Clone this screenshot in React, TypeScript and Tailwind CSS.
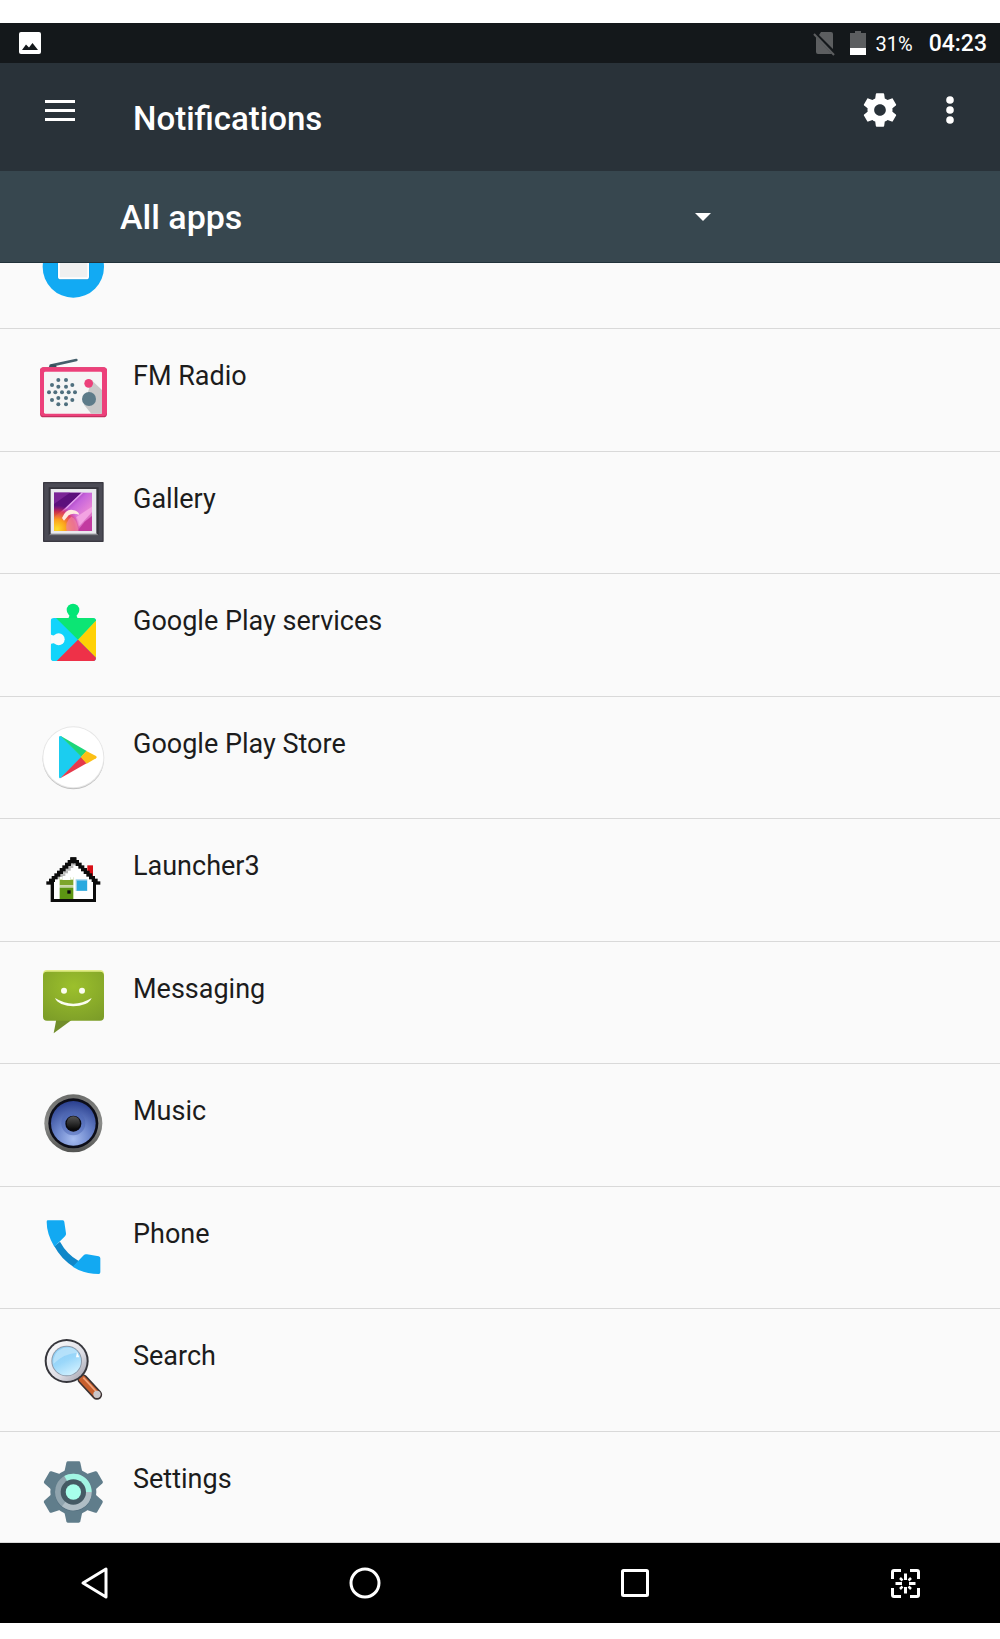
import React from "react";

function FolderIcon() {
  return (
    <svg viewBox="111 789 216 108" className="h-9 w-18 shrink-0" aria-hidden="true">
      <circle cx="220" cy="801" r="92" fill="#12aaf3" />
      <rect x="173" y="760" width="95" height="80" rx="9" fill="#0d97dc" />
      <rect x="174" y="760" width="93" height="78" rx="8" fill="#fff" />
      <rect x="180" y="760" width="82" height="72" fill="#f0f0f0" />
    </svg>
  );
}

const speakerDots = [
  [115, 120], [138, 120], [96, 135], [157, 135], [115, 140], [138, 140],
  [87, 157], [106, 157], [126, 157], [146, 157], [165, 157],
  [115, 174], [138, 174], [96, 180], [157, 180], [115, 193], [138, 193],
];

function RadioIcon() {
  return (
    <svg viewBox="51 42 216 216" className="size-18 shrink-0" aria-hidden="true">
      <path d="M92 77 L169 60" stroke="#455f6b" strokeWidth="8" strokeLinecap="round" />
      <path d="M86 82 Q92 68 108 75 L110 82 Z" fill="#37505c" />
      <rect x="60" y="82" width="201" height="150" rx="11" fill="#c2305f" />
      <rect x="60" y="82" width="201" height="146" rx="11" fill="#ec407a" />
      <rect x="72" y="95" width="174" height="126" rx="4" fill="#f5f5f5" />
      <path d="M215 121 L246 150 V221 H214 L192 194 Z" fill="#c8c8c8" />
      {speakerDots.map(([x, y]) => (
        <circle key={`${x}-${y}`} cx={x} cy={y} r="6" fill="#4f6f7e" />
      ))}
      <circle cx="206" cy="130" r="13" fill="#ec407a" />
      <circle cx="207" cy="177" r="21" fill="#5d7b89" />
    </svg>
  );
}

function GalleryIcon() {
  return (
    <svg viewBox="51 411 216 216" className="size-18 shrink-0" aria-hidden="true">
      <defs>
        <linearGradient id="photo" x1="0" y1="0" x2="1" y2="1">
          <stop offset="0.2" stopColor="#8d1fa8" />
          <stop offset="0.45" stopColor="#c766dc" />
          <stop offset="0.7" stopColor="#ea86d6" />
          <stop offset="1" stopColor="#b8399c" />
        </linearGradient>
        <radialGradient id="glow" cx="0.08" cy="0.95" r="0.62">
          <stop offset="0" stopColor="#ffe02a" />
          <stop offset="0.4" stopColor="#fba01c" />
          <stop offset="0.75" stopColor="#e8323c" stopOpacity="0.75" />
          <stop offset="1" stopColor="#c0208a" stopOpacity="0" />
        </radialGradient>
      </defs>
      <rect x="69" y="426" width="182" height="180" rx="2" fill="#3a3942" />
      <rect x="73" y="430" width="174" height="172" fill="#4b4b55" />
      <path d="M86 442 H236 V586 H86 Z" fill="#34333b" />
      <path d="M86 586 L96 578 H228 L236 586 Z" fill="#85858c" />
      <rect x="92" y="447" width="137" height="134" fill="#e9e9ee" />
      <rect x="102" y="458" width="114" height="115" fill="url(#photo)" />
      <path d="M102 458 H184 L136 503 L102 532 Z" fill="#5c0f7c" />
      <path d="M102 458 H150 L102 492 Z" fill="#7a2496" />
      <path d="M184 458 H190 L140 506 L120 520 Z" fill="#e3a4ee" />
      <path d="M168 532 L216 500 V516 L176 560 Z" fill="#f3a3e2" />
      <path d="M172 573 L194 545 L216 528 V573 Z" fill="#c23aa0" />
      <rect x="102" y="458" width="114" height="115" fill="url(#glow)" />
      <path d="M126 534 Q138 506 158 510 Q174 512 178 524 Q156 518 146 526 L132 542 Z" fill="#ffeadf" />
      <path d="M140 573 Q134 544 154 530 Q170 534 176 573 Z" fill="#ee86a4" opacity="0.7" />
    </svg>
  );
}

function PlayServicesIcon() {
  return (
    <svg viewBox="51 57 216 216" className="size-18 shrink-0" aria-hidden="true">
      <defs>
        <clipPath id="puzzle">
          <rect x="92" y="114" width="136" height="129" rx="10" />
        </clipPath>
      </defs>
      <circle cx="159" cy="90" r="19" fill="#02e676" />
      <path d="M148 100 H170 V108 Q170 115 178 116 H140 Q148 115 148 108 Z" fill="#02e676" />
      <g clipPath="url(#puzzle)">
        <rect x="92" y="114" width="136" height="129" fill="#12d4fb" />
        <path d="M108 114 H235 L174 179 Z" fill="#0ce574" />
        <path d="M235 114 V240 L174 179 Z" fill="#ffd105" />
        <path d="M108 245 H240 L174 179 Z" fill="#ee3148" />
      </g>
      <circle cx="116" cy="178" r="18" fill="#fafafa" />
      <path d="M91 160 Q92 168 104 166 V190 Q92 188 91 197 Z" fill="#fafafa" />
    </svg>
  );
}

function PlayStoreIcon() {
  return (
    <svg viewBox="51 426 216 216" className="size-18 shrink-0" aria-hidden="true">
      <circle cx="160" cy="536" r="92" fill="#c0c0c0" />
      <circle cx="160" cy="532" r="93" fill="#e6e6e6" />
      <circle cx="160" cy="532" r="90" fill="#fff" />
      <path d="M117 471 Q118 466 124 469 L186 530 L122 594 Q117 596 117 590 Z" fill="#1bcdf0" />
      <path d="M121 467 L200 513 L184 530 Z" fill="#1cd67a" />
      <path d="M184 530 L200 550 L121 595 Z" fill="#e5394b" />
      <path d="M199 513 L228 528 Q233 532 228 535 L200 551 L182 531 Z" fill="#fbbf16" />
    </svg>
  );
}

const roofSteps = [0, 1, 2, 3, 4, 5, 6, 7, 8, 9];

function LauncherIcon() {
  return (
    <svg viewBox="51 12 216 216" className="size-18 shrink-0" aria-hidden="true">
      <rect x="202" y="76" width="17" height="34" fill="#d80f16" />
      <path d="M160 60 L226 126 V184 H94 V126 Z" fill="#fff" />
      {roofSteps.slice(1, 7).map((i) => (
        <rect key={i} x={160 - 8 * i} y={60 + 8 * i} width="16" height="8" fill="#b9b9b9" />
      ))}
      {roofSteps.map((i) => (
        <g key={i} fill="#0c0c0c">
          <rect x={151 - 8 * i} y={52 + 8 * i} width="18" height="10" />
          <rect x={151 + 8 * i} y={52 + 8 * i} width="18" height="10" />
        </g>
      ))}
      <path d="M92 124 H102 V177 H219 V124 H228 V186 H92 Z" fill="#0c0c0c" />
      <path d="M119 112 H127 V120 H152 V112 H160 V136 H119 Z" fill="#7da52b" />
      <rect x="119" y="111" width="9" height="8" fill="#fff" />
      <rect x="152" y="111" width="8" height="8" fill="#fff" />
      <rect x="119" y="136" width="41" height="7" fill="#c5d3a4" />
      <rect x="119" y="143" width="41" height="34" fill="#5c9513" />
      <rect x="142" y="151" width="10" height="10" fill="#0c0c0c" />
      <rect x="167" y="118" width="35" height="35" fill="#93cdea" />
      <rect x="171" y="122" width="30" height="30" fill="#2aa9df" />
    </svg>
  );
}

function MessagingIcon() {
  return (
    <svg viewBox="51 381 216 216" className="size-18 shrink-0" aria-hidden="true">
      <defs>
        <radialGradient id="bubble" cx="0.5" cy="0.3" r="0.8">
          <stop offset="0" stopColor="#9cc02c" />
          <stop offset="1" stopColor="#7c9d28" />
        </radialGradient>
      </defs>
      <path d="M109 538 L101 580 L158 538 Z" fill="#718d2b" />
      <rect x="69" y="390" width="183" height="60" rx="12" fill="#e2ed86" />
      <rect x="69" y="395" width="183" height="147" rx="12" fill="url(#bubble)" />
      <circle cx="132" cy="452" r="9" fill="#fbfdf0" />
      <circle cx="186" cy="452" r="9" fill="#fbfdf0" />
      <path d="M105 474 Q160 508 215 474 Q210 486 196 492 Q160 506 124 492 Q108 484 105 474 Z" fill="#fbfdf0" />
    </svg>
  );
}

function MusicIcon() {
  return (
    <svg viewBox="51 27 216 216" className="size-18 shrink-0" aria-hidden="true">
      <defs>
        <linearGradient id="rim" x1="0" y1="0" x2="0" y2="1">
          <stop offset="0" stopColor="#6c6d6b" />
          <stop offset="0.5" stopColor="#8b8c8a" />
          <stop offset="1" stopColor="#525351" />
        </linearGradient>
        <radialGradient id="cone" cx="0.5" cy="0.85" r="0.85">
          <stop offset="0" stopColor="#a7bdf0" />
          <stop offset="0.45" stopColor="#6c86cc" />
          <stop offset="1" stopColor="#2a3f8e" />
        </radialGradient>
        <linearGradient id="cap" x1="0" y1="0" x2="0" y2="1">
          <stop offset="0" stopColor="#555" />
          <stop offset="1" stopColor="#080808" />
        </linearGradient>
      </defs>
      <circle cx="160" cy="130" r="87" fill="url(#rim)" />
      <circle cx="160" cy="130" r="75" fill="#0c0d18" />
      <circle cx="160" cy="130" r="67" fill="url(#cone)" />
      <circle cx="160" cy="130" r="36" fill="#4964b1" opacity="0.5" />
      <circle cx="160" cy="131" r="24" fill="#0a0a0f" />
      <circle cx="160" cy="129" r="20" fill="url(#cap)" />
    </svg>
  );
}

function PhoneIcon() {
  return (
    <svg viewBox="51 396 216 216" className="size-18 shrink-0" aria-hidden="true">
      <path d="M103 499 L120 485 Q140 522 176 543 L160 560 Q124 538 103 499 Z" fill="#0f87c9" />
      <path d="M84 421 H128 Q133 421 133 426 L138 460 Q139 465 135 469 L103 500 Q80 462 80 425 Q80 421 84 421 Z" fill="#12a9f2" />
      <path d="M158 560 L191 526 Q195 521 201 523 L236 529 Q241 530 241 535 V577 Q241 582 236 582 Q192 582 158 560 Z" fill="#12a9f2" />
    </svg>
  );
}

function SearchIcon() {
  return (
    <svg viewBox="51 42 216 216" className="size-18 shrink-0" aria-hidden="true">
      <defs>
        <linearGradient id="ring" x1="0" y1="0" x2="1" y2="1">
          <stop offset="0" stopColor="#fff" />
          <stop offset="0.6" stopColor="#dcdce4" />
          <stop offset="1" stopColor="#9a9aa6" />
        </linearGradient>
        <linearGradient id="glass" x1="0.2" y1="0" x2="0.7" y2="1">
          <stop offset="0" stopColor="#8ccdf5" />
          <stop offset="0.5" stopColor="#9ad7fa" />
          <stop offset="1" stopColor="#d2f1ff" />
        </linearGradient>
      </defs>
      <path d="M176 160 L232 224" stroke="#2b2b2f" strokeWidth="13" strokeLinecap="round" />
      <path d="M188 178 L231 224" stroke="#3a3233" strokeWidth="31" strokeLinecap="round" />
      <path d="M187 177 L230 223" stroke="#c75f2e" strokeWidth="21" strokeLinecap="round" />
      <path d="M190 173 L230 216" stroke="#f0a47c" strokeWidth="5" />
      <circle cx="231" cy="223" r="11" fill="#c9c6ca" />
      <circle cx="140" cy="123" r="66" fill="#36363c" />
      <circle cx="140" cy="123" r="60" fill="url(#ring)" />
      <circle cx="140" cy="123" r="46" fill="#8b98a8" />
      <circle cx="140" cy="123" r="43" fill="url(#glass)" />
      <path d="M100 132 Q98 96 130 84 Q162 78 174 98 Q130 100 100 132 Z" fill="#c3e7fb" opacity="0.7" />
      <path d="M171 96 L178 112 L168 112 Z" fill="#fff" />
    </svg>
  );
}

function SettingsIcon() {
  return (
    <svg viewBox="51 411 216 216" className="size-18 shrink-0" aria-hidden="true">
      <g fill="#607d8b">
        <circle cx="160" cy="516" r="69" />
        {[0, 60, 120, 180, 240, 300].map((angle) => (
          <path
            key={angle}
            d="M144 424 H177 Q180 424 181 428 L187 456 L160 516 L133 456 L139 428 Q140 424 144 424 Z"
            transform={`rotate(${angle} 160 516)`}
          />
        ))}
      </g>
      <circle cx="160" cy="519" r="55" fill="#50697a" opacity="0.6" />
      <circle cx="160" cy="516" r="55" fill="#90a4ae" />
      <path d="M160 516 L126 559 A55 55 0 0 0 215 516 Z" fill="#b0bec5" />
      <path d="M160 516 L133 468 A55 55 0 0 1 215 516 Z" fill="#a2f5e3" />
      <circle cx="160" cy="516" r="38" fill="#455a64" />
      <circle cx="160" cy="516" r="23" fill="#a7ffeb" />
    </svg>
  );
}

const apps = [
  { name: "FM Radio", icon: RadioIcon },
  { name: "Gallery", icon: GalleryIcon },
  { name: "Google Play services", icon: PlayServicesIcon },
  { name: "Google Play Store", icon: PlayStoreIcon },
  { name: "Launcher3", icon: LauncherIcon },
  { name: "Messaging", icon: MessagingIcon },
  { name: "Music", icon: MusicIcon },
  { name: "Phone", icon: PhoneIcon },
  { name: "Search", icon: SearchIcon },
  { name: "Settings", icon: SettingsIcon },
];

function StatusBar() {
  return (
    <div className="flex h-10 items-center bg-[#14181b] pr-[13px] pl-4 text-white">
      <svg viewBox="0 0 28 28" className="size-7" aria-hidden="true">
        <rect x="3" y="3" width="22" height="22" rx="2" fill="#fff" />
        <path d="M6 21 L10 15.5 L13 18.5 L16.5 14 L22 21 Z" fill="#14181b" />
      </svg>
      <svg viewBox="0 0 28 28" className="ml-auto size-7" aria-hidden="true">
        <path d="M11 3 H21 Q23 3 23 5 V20 L9 6 Z M6 8 L22 25 H8 Q6 25 6 23 Z" fill="#5c5e60" />
        <path d="M4 5 L24 26" stroke="#5c5e60" strokeWidth="2" />
      </svg>
      <svg viewBox="0 0 16 24" className="ml-3 h-6 w-4" aria-hidden="true">
        <path d="M5 0 H11 V2 H16 V17 H0 V2 H5 Z" fill="#5c5e60" />
        <rect y="17" width="16" height="7" fill="#fff" />
      </svg>
      <span className="ml-[10px] pt-[2px] text-[20px]">31%</span>
      <span className="ml-4 pt-[2px] text-[23px] font-medium">04:23</span>
    </div>
  );
}

function Toolbar() {
  return (
    <header className="flex h-[108px] items-start bg-[#293239] pt-[17px] pr-5 pl-[30px] text-white">
      <button type="button" aria-label="Open menu" className="flex size-[60px] items-center justify-center">
        <svg viewBox="0 0 30 21" className="h-[21px] w-[30px]" fill="currentColor">
          <rect y="0" width="30" height="3" />
          <rect y="9" width="30" height="3" />
          <rect y="18" width="30" height="3" />
        </svg>
      </button>
      <h1 className="ml-[43px] pt-[17px] text-[33px] leading-[44px] font-medium">Notifications</h1>
      <button type="button" aria-label="Notification settings" className="ml-auto flex size-[60px] items-center justify-center">
        <svg viewBox="0 0 24 24" className="size-10" fill="currentColor">
          <path d="M19.43 12.98c.04-.32.07-.64.07-.98s-.03-.66-.07-.98l2.11-1.65c.19-.15.24-.42.12-.64l-2-3.46c-.12-.22-.39-.3-.61-.22l-2.49 1c-.52-.4-1.08-.73-1.69-.98l-.38-2.65C14.46 2.18 14.25 2 14 2h-4c-.25 0-.46.18-.49.42l-.38 2.65c-.61.25-1.17.59-1.69.98l-2.49-1c-.23-.09-.49 0-.61.22l-2 3.46c-.13.22-.07.49.12.64l2.11 1.65c-.04.32-.07.65-.07.98s.03.66.07.98l-2.11 1.65c-.19.15-.24.42-.12.64l2 3.46c.12.22.39.3.61.22l2.49-1c.52.4 1.08.73 1.69.98l.38 2.65c.03.24.24.42.49.42h4c.25 0 .46-.18.49-.42l.38-2.65c.61-.25 1.17-.59 1.69-.98l2.49 1c.23.09.49 0 .61-.22l2-3.46c.12-.22.07-.49-.12-.64l-2.11-1.65zM12 15.5c-1.93 0-3.5-1.57-3.5-3.5s1.57-3.5 3.5-3.5 3.5 1.57 3.5 3.5-1.57 3.5-3.5 3.5z" />
        </svg>
      </button>
      <button type="button" aria-label="More options" className="ml-[10px] flex size-[60px] items-center justify-center">
        <svg viewBox="0 0 8 28" className="h-7 w-2" fill="currentColor">
          <circle cx="4" cy="4" r="3.8" />
          <circle cx="4" cy="14" r="3.8" />
          <circle cx="4" cy="24" r="3.8" />
        </svg>
      </button>
    </header>
  );
}

function AppFilter() {
  return (
    <div className="h-[92px] border-b border-[#22323a] bg-[#37474f] pl-[120px]">
      <div className="relative h-full w-[600px] max-w-full">
        <select
          aria-label="Filter apps"
          className="h-full w-full appearance-none bg-transparent pt-[2px] text-[34px] font-medium text-white outline-none"
        >
          <option>All apps</option>
        </select>
        <svg viewBox="0 0 16 8" className="pointer-events-none absolute top-[42px] right-[9px] h-2 w-4" aria-hidden="true">
          <path d="M0 0 H16 L8 8 Z" fill="#fff" />
        </svg>
      </div>
    </div>
  );
}

function AppList() {
  return (
    <ul className="bg-[#fafafa]">
      {/* row scrolled halfway under the filter bar */}
      <li className="h-[66px] border-b border-[#d9d9d9] pl-[37px]">
        <FolderIcon />
      </li>
      {apps.map(({ name, icon: Icon }) => (
        <li
          key={name}
          className="flex h-[122px] items-start border-b border-[#d9d9d9] pt-[25px] pl-[37px] last:h-[111px] even:h-[123px]"
        >
          <Icon />
          <span className="ml-6 pt-[6px] text-[27px] leading-8 text-[#1c1c1c]">{name}</span>
        </li>
      ))}
    </ul>
  );
}

function NavBar() {
  return (
    <nav className="flex h-20 items-center justify-between bg-black px-[75px] text-white">
      <button type="button" aria-label="Back">
        <svg viewBox="0 0 40 40" className="size-10" fill="none" stroke="currentColor" strokeWidth="3" strokeLinejoin="round">
          <path d="M8 20 L31 6 V34 Z" />
        </svg>
      </button>
      <button type="button" aria-label="Home">
        <svg viewBox="0 0 40 40" className="size-10" fill="none" stroke="currentColor" strokeWidth="3">
          <circle cx="20" cy="20" r="14" />
        </svg>
      </button>
      <button type="button" aria-label="Recent apps">
        <svg viewBox="0 0 40 40" className="size-10" fill="none" stroke="currentColor" strokeWidth="3">
          <rect x="7.5" y="7.5" width="25" height="25" rx="1" />
        </svg>
      </button>
      <button type="button" aria-label="Take screenshot">
        <svg viewBox="0 0 40 40" className="size-10" fill="none" stroke="currentColor" strokeWidth="3">
          <path d="M7.5 16 V9 Q7.5 7.5 9 7.5 H16 M25 7.5 H32 Q33.5 7.5 33.5 9 V16 M33.5 25 V32 Q33.5 33.5 32 33.5 H25 M16 33.5 H9 Q7.5 33.5 7.5 32 V25" />
          <path d="M20.5 10.5 V17 M20.5 24 V30.5 M10.5 20.5 H17 M24 20.5 H30.5" />
          <path d="M15 15 L17.5 17.5 M26 15 L23.5 17.5 M15 26 L17.5 23.5 M26 26 L23.5 23.5" strokeWidth="2.5" />
        </svg>
      </button>
    </nav>
  );
}

export default function App() {
  return (
    <main className="bg-white pt-[23px] pb-4 font-['Roboto',sans-serif]">
      <StatusBar />
      <Toolbar />
      <AppFilter />
      <AppList />
      <NavBar />
    </main>
  );
}
